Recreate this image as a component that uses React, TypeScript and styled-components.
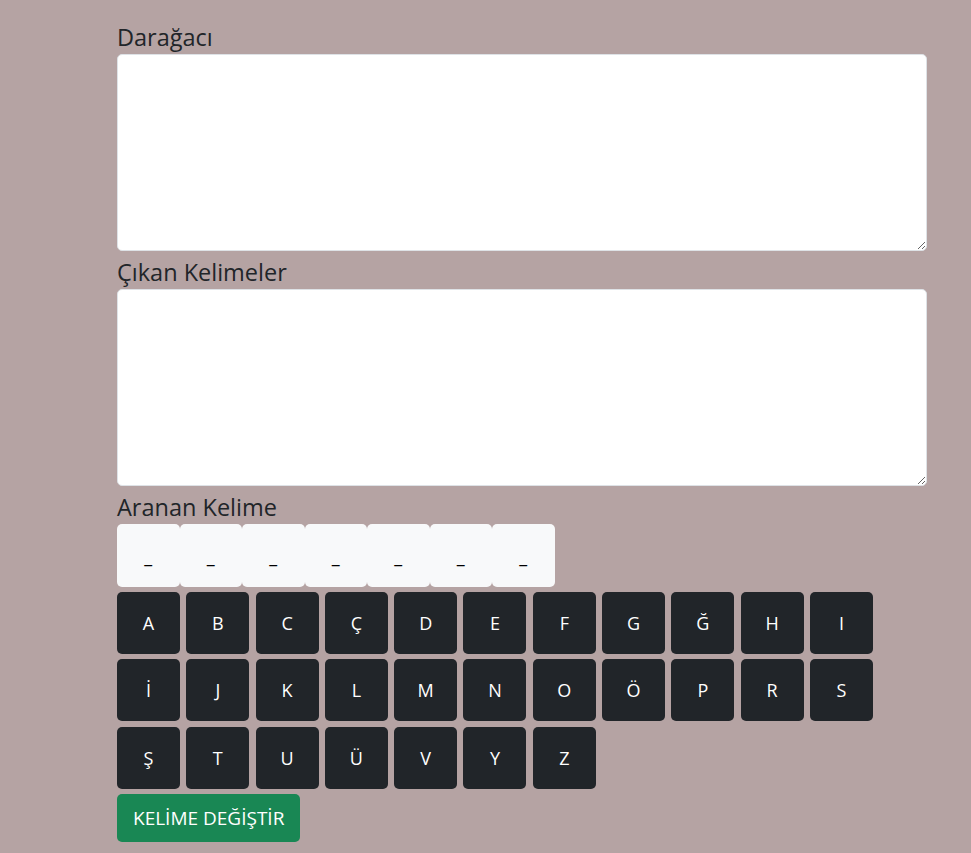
import React from "react"
import styled, { createGlobalStyle } from "styled-components"

const rows = [
    ["A", "B", "C", "Ç", "D", "E", "F", "G", "Ğ", "H", "I"],
    ["İ", "J", "K", "L", "M", "N", "O", "Ö", "P", "R", "S"],
    ["Ş", "T", "U", "Ü", "V", "Y", "Z"],
]

const blanks = ["_", "_", "_", "_", "_", "_", "_"]

export default function App() {
    return (
        <>
            <Global />
            <Page>
                <Label>Darağacı</Label>
                <Area readOnly />
                <Label>Çıkan Kelimeler</Label>
                <Area readOnly />
                <Label>Aranan Kelime</Label>
                <Blanks>
                    {blanks.map((b, i) => (
                        <Blank key={i}>{b}</Blank>
                    ))}
                </Blanks>
                <Keys>
                    {rows.flat().map((k) => (
                        <Key key={k}>{k}</Key>
                    ))}
                </Keys>
                <Change>KELİME DEĞİŞTİR</Change>
            </Page>
        </>
    )
}

const Global = createGlobalStyle`
    html, body {
        margin: 0;
        background: #b5a3a3;
        font-family: "Open Sans", "Noto Sans", sans-serif;
        color: #212529;
    }
`

const Page = styled.div`
    display: flex;
    flex-direction: column;
    align-items: flex-start;
    width: 810px;
    margin-left: 117px;
    padding-top: 16px;
`

const Label = styled.label`
    box-sizing: border-box;
    font-size: 23.5px;
    line-height: 36px;
    height: 38px;
    padding-top: 3px;
    color: #212529;
`

const Area = styled.textarea`
    box-sizing: border-box;
    width: 810px;
    height: 197px;
    margin: 0;
    border: 1px solid #dee2e6;
    border-radius: 5px;
    background: #fff;
    resize: vertical;
    outline: none;
`

const Blanks = styled.div`
    display: flex;
`

const Blank = styled.div`
    box-sizing: border-box;
    width: 62.5px;
    height: 63px;
    display: flex;
    align-items: center;
    justify-content: center;
    background: #f8f9fa;
    border-radius: 5px;
    font-size: 18px;
    color: #000;
`

const Keys = styled.div`
    display: flex;
    flex-wrap: wrap;
    width: 760px;
    column-gap: 6.3px;
    row-gap: 5.3px;
    margin-top: 5px;
`

const Key = styled.button`
    width: 63px;
    height: 62px;
    padding: 0;
    border: none;
    border-radius: 5px;
    background: #212529;
    color: #fff;
    font-family: inherit;
    font-size: 18px;
`

const Change = styled.button`
    margin-top: 5px;
    height: 48px;
    padding: 0 16px;
    border: none;
    border-radius: 5px;
    background: #198754;
    color: #fff;
    font-family: inherit;
    font-size: 19px;
`
